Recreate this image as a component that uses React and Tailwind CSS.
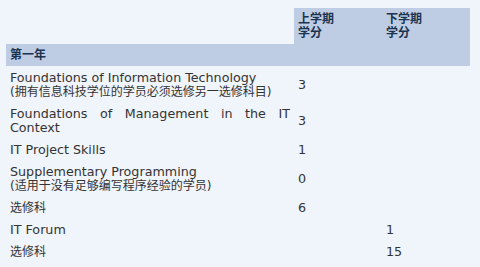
export default function App() {
  const rows = [
    { name: "Foundations of Information Technology", sub: "(拥有信息科技学位的学员必须选修另一选修科目)", s1: "3", s2: "" },
    { name: "Foundations of Management in the IT Context", s1: "3", s2: "", justify: true },
    { name: "IT Project Skills", s1: "1", s2: "" },
    { name: "Supplementary Programming", sub: "(适用于没有足够编写程序经验的学员)", s1: "0", s2: "" },
    { name: "选修科", cjk: true, s1: "6", s2: "" },
    { name: "IT Forum", s1: "", s2: "1" },
    { name: "选修科", cjk: true, s1: "", s2: "15" },
  ];

  return (
    <div className="w-[480px] h-[267px] bg-[#f0f4fb] pt-2 pl-[6px] text-[12px] leading-[14px] text-[#333] font-['DejaVu_Sans','Noto_Sans_CJK_SC',sans-serif]">
      <table className="w-[464px] border-collapse table-fixed">
        <colgroup>
          <col className="w-[288px]" />
          <col className="w-[88px]" />
          <col />
        </colgroup>
        <thead>
          <tr className="h-[36px]">
            <th></th>
            <th className="bg-[#bfcde4] text-left align-top pt-1 px-1 font-bold text-[#1b3350]">
              上学期
              <br />
              学分
            </th>
            <th className="bg-[#bfcde4] text-left align-top pt-1 px-1 font-bold text-[#1b3350]">
              下学期
              <br />
              学分
            </th>
          </tr>
          <tr className="h-[22px] bg-[#bfcde4]">
            <th colSpan={3} className="text-left px-1 font-bold text-[#1b3350]">
              第一年
            </th>
          </tr>
        </thead>
        <tbody>
          {rows.map((r, i) => (
            <tr key={i}>
              <td className={`pt-[5px] pb-[3px] px-1 ${r.justify ? "text-justify" : ""}`}>
                <span className={r.cjk ? "" : "text-[12.7px]"}>{r.name}</span>
                {r.sub && (
                  <>
                    <br />
                    {r.sub}
                  </>
                )}
              </td>
              <td className="pt-[5px] pb-[3px] px-1 align-middle text-[12.7px]">{r.s1}</td>
              <td className="pt-[5px] pb-[3px] px-1 align-middle text-[12.7px]">{r.s2}</td>
            </tr>
          ))}
        </tbody>
      </table>
    </div>
  );
}
